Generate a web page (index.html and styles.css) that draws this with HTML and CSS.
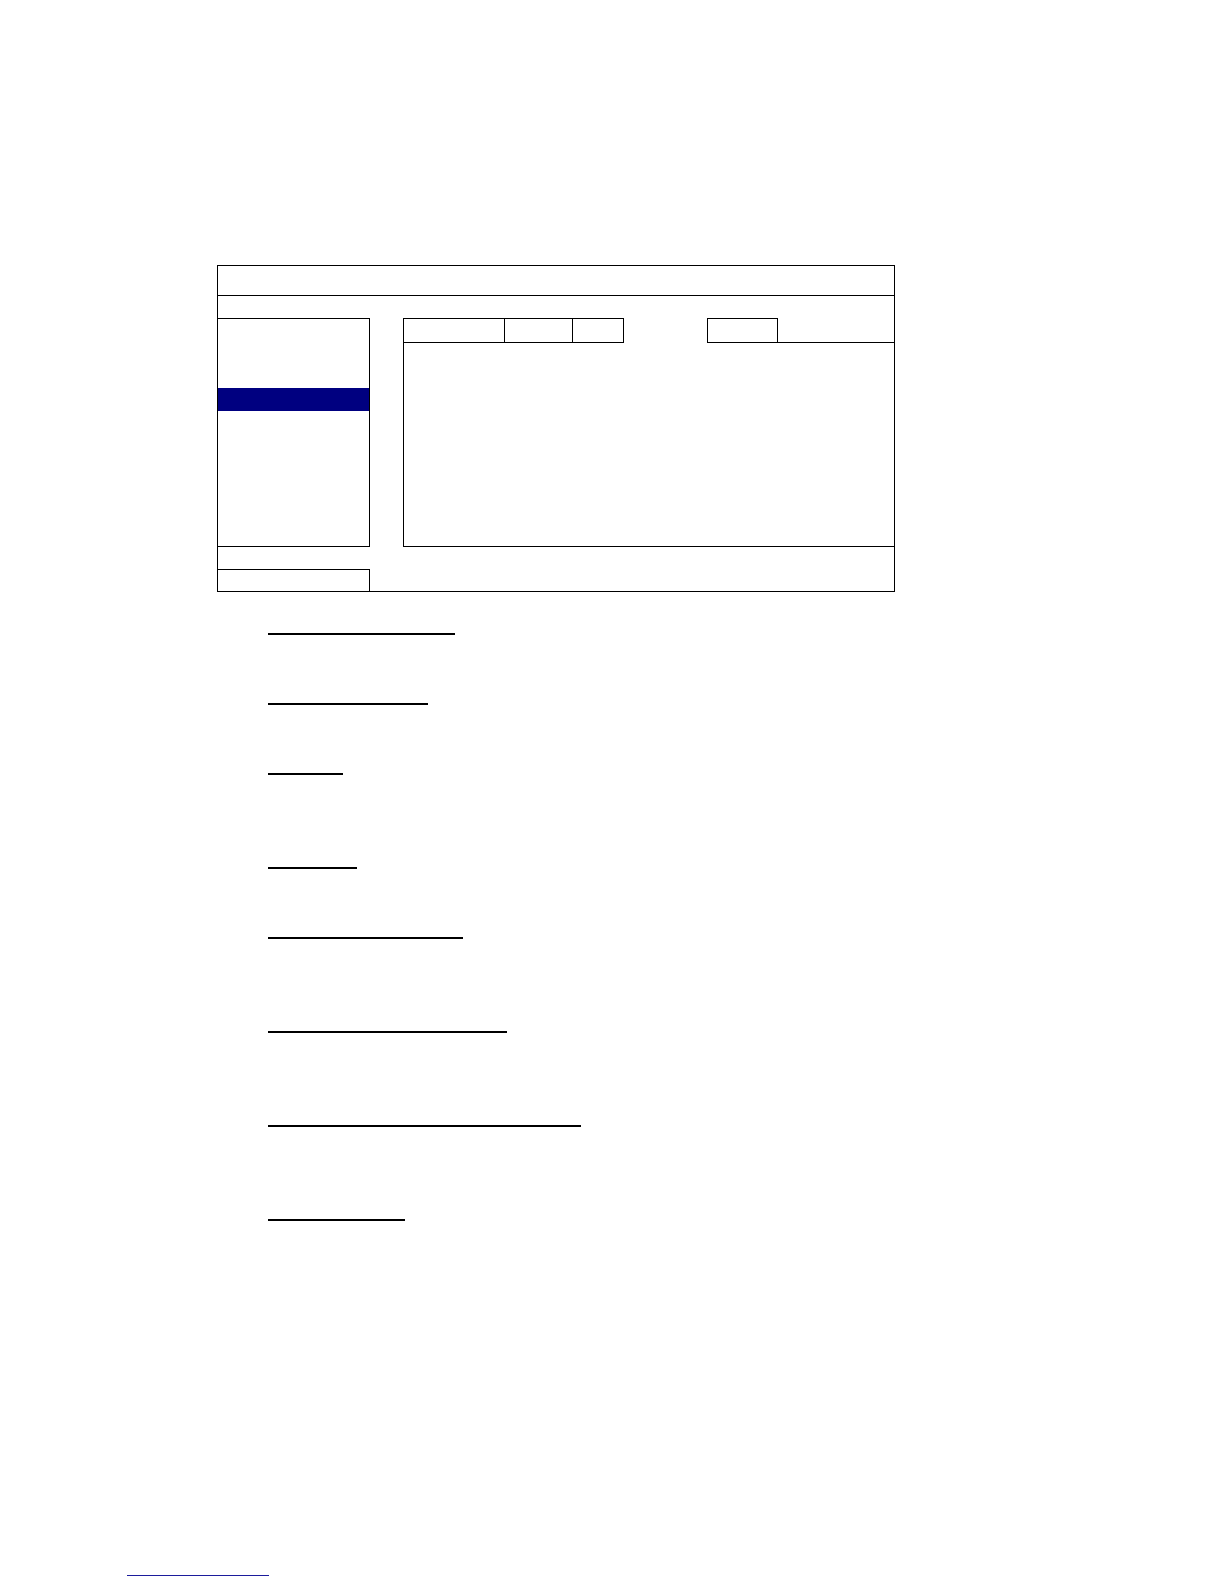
FILE: index.html
```html
<!DOCTYPE html>
<html lang="en">
<head>
<meta charset="utf-8">
<title>Menu layout</title>
<link rel="stylesheet" href="styles.css">
</head>
<body>
<div class="page">
  <div class="window">
    <div class="titlebar"></div>
    <div class="main">
      <div class="leftcol">
        <div class="lpanel">
          <div class="sel"></div>
        </div>
        <div class="lbox"></div>
      </div>
      <div class="rpanel">
        <div class="tabs">
          <div class="tab t1"></div>
          <div class="tab t2"></div>
          <div class="tab t3"></div>
          <div class="tab t4 active"></div>
          <div class="tab t5"></div>
          <div class="tabfill"></div>
        </div>
        <div class="rbody"></div>
      </div>
    </div>
  </div>
  <div class="notes">
    <div class="uline w1 g1"></div>
    <div class="uline w2 g2"></div>
    <div class="uline w3 g2"></div>
    <div class="uline w4 g3"></div>
    <div class="uline w5 g2"></div>
    <div class="uline w6 g3"></div>
    <div class="uline w7 g3"></div>
    <div class="uline w8 g3"></div>
  </div>
  <div class="link"></div>
</div>
</body>
</html>
```
FILE: styles.css
```css
html, body {
  margin: 0;
  padding: 0;
  background: #fff;
  font-family: "Liberation Sans", Arial, sans-serif;
}
.page {
  width: 1224px;
  height: 1584px;
  padding-top: 265px;
  box-sizing: border-box;
  overflow: hidden;
}
.window {
  margin-left: 217px;
  width: 678px;
  height: 327px;
  box-sizing: border-box;
  border: 1px solid #000;
  display: flex;
  flex-direction: column;
}
.titlebar {
  height: 30px;
  box-sizing: border-box;
  border-bottom: 1px solid #000;
}
.main {
  flex: 1;
  display: flex;
}
.leftcol {
  width: 152px;
  display: flex;
  flex-direction: column;
  padding-top: 22px;
  box-sizing: border-box;
}
.lpanel {
  height: 229px;
  box-sizing: border-box;
  border-top: 1px solid #000;
  border-right: 1px solid #000;
  border-bottom: 1px solid #000;
  padding-top: 69px;
}
.sel {
  height: 23px;
  background: #000080;
}
.lbox {
  margin-top: 22px;
  flex: 1;
  border-top: 1px solid #000;
  border-right: 1px solid #000;
}
.rpanel {
  flex: 1;
  margin-left: 33px;
  margin-top: 22px;
  height: 229px;
  box-sizing: border-box;
  border-left: 1px solid #000;
  border-bottom: 1px solid #000;
  display: flex;
  flex-direction: column;
}
.tabs {
  height: 25px;
  display: flex;
}
.tab {
  box-sizing: border-box;
  height: 25px;
  border-top: 1px solid #000;
  border-bottom: 1px solid #000;
  border-right: 1px solid #000;
}
.t1 { width: 101px; }
.t2 { width: 68px; }
.t3 { width: 51px; }
.t4 { width: 83px; }
.t5 { width: 71px; border-left: 1px solid #000; }
.tab.active {
  border: none;
}
.tabfill {
  flex: 1;
  box-sizing: border-box;
  height: 25px;
  border-bottom: 1px solid #000;
}
.rbody {
  flex: 1;
}
.notes {
  margin-left: 268px;
  display: flex;
  flex-direction: column;
  align-items: flex-start;
}
.uline {
  height: 2px;
  background: #000;
}
.g1 { margin-top: 41px; }
.g2 { margin-top: 68px; }
.g3 { margin-top: 92px; }
.w1 { width: 187px; }
.w2 { width: 160px; }
.w3 { width: 75px; }
.w4 { width: 89px; }
.w5 { width: 195px; }
.w6 { width: 239px; }
.w7 { width: 313px; }
.w8 { width: 137px; }
.link {
  margin-left: 127px;
  margin-top: 354px;
  width: 142px;
  height: 1px;
  background: #1c1c9c;
}
```
